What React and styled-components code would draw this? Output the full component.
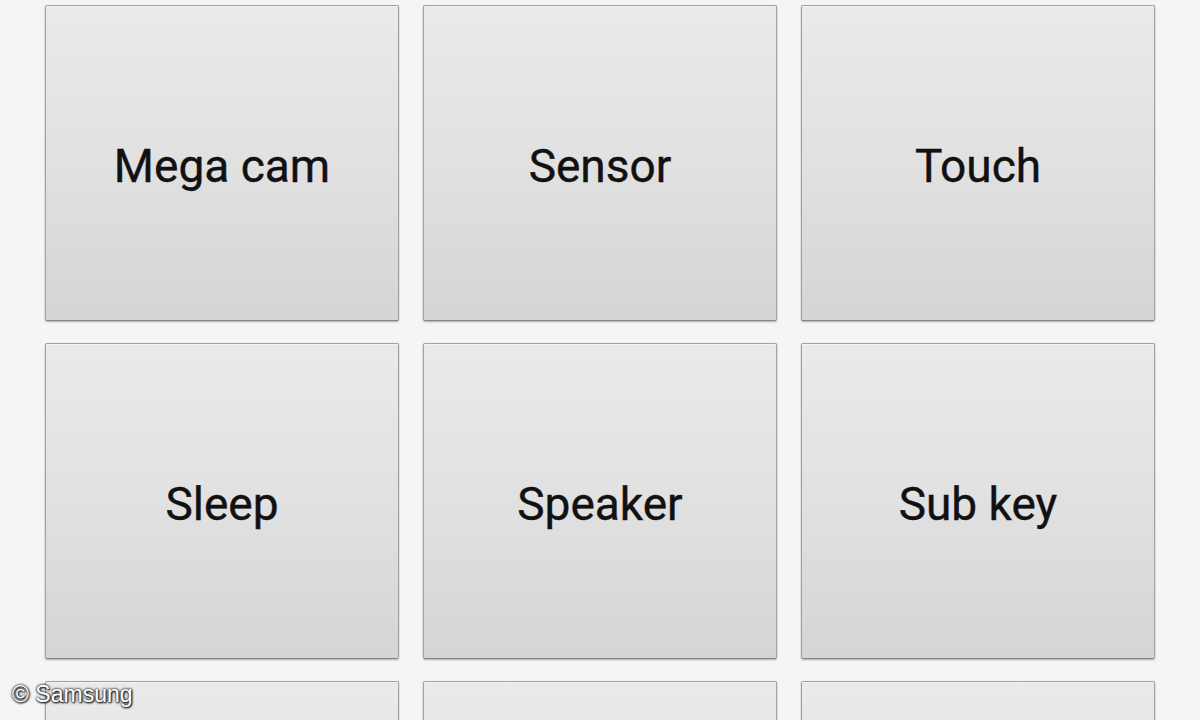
import React from 'react'
import styled, { createGlobalStyle } from 'styled-components'

const GlobalStyle = createGlobalStyle`
  html, body {
    margin: 0;
    padding: 0;
    background: #f5f5f5;
    overflow: hidden;
  }
`

const items = ['Mega cam', 'Sensor', 'Touch', 'Sleep', 'Speaker', 'Sub key', '', '', '']

export default function App() {
  return (
    <>
      <GlobalStyle />
      <Page>
        <Grid>
          {items.map((label, i) => (
            <TestButton key={i}>{label}</TestButton>
          ))}
        </Grid>
        <Credit>© Samsung</Credit>
      </Page>
    </>
  )
}

const Page = styled.div`
  position: relative;
  width: 1200px;
  height: 720px;
  overflow: hidden;
  background: #f5f5f5;
`

const Grid = styled.div`
  display: grid;
  grid-template-columns: repeat(3, 354px);
  grid-auto-rows: 316px;
  column-gap: 24px;
  row-gap: 22px;
  padding: 5px 45px 0 45px;
`

const TestButton = styled.div`
  display: flex;
  align-items: center;
  justify-content: center;
  box-sizing: border-box;
  border: 1px solid #a0a0a0;
  border-bottom-color: #858585;
  border-radius: 2px;
  background: linear-gradient(to bottom, #eaeaea 0%, #e1e1e1 50%, #d5d5d5 100%);
  box-shadow: 0 1px 2px rgba(0, 0, 0, 0.3), inset 0 1px 0 #f4f4f4;
  font-family: Roboto, "Noto Sans", sans-serif;
  font-size: 46px;
  color: #111;
  -webkit-text-stroke: 0.4px #111;
  padding-top: 6px;
`

const Credit = styled.div`
  position: absolute;
  left: 12px;
  bottom: 12px;
  font-family: "Liberation Sans", Arial, sans-serif;
  font-size: 23px;
  color: #ffffff;
  text-shadow: 0 0 3px #222, 0 0 2px #222, 1px 1px 2px #000;
`
